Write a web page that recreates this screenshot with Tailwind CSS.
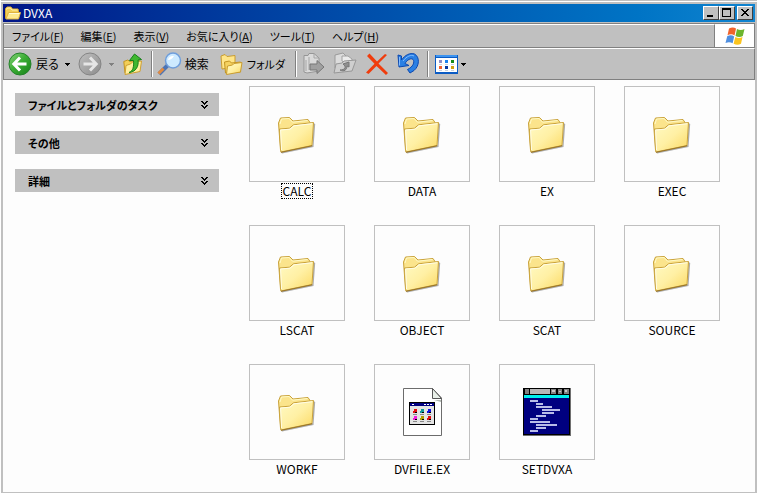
<!DOCTYPE html>
<html lang="ja">
<head>
    <meta charset="UTF-8">
    <meta name="viewport" content="width=device-width, initial-scale=1.0">
    <title>DVXA</title>
    <script src="https://cdn.jsdelivr.net/npm/@tailwindcss/browser@4"></script>
</head>
<body class="bg-[#c0c0c0] font-['Noto_Sans_CJK_JP',sans-serif] text-[12px] leading-[16px] text-black [font-feature-settings:'palt']">
    <!-- Shared icons -->
    <svg class="absolute w-0 h-0">
        <defs>
            <linearGradient id="folderFront" x1="0" y1="0" x2="1" y2="1">
                <stop offset="0" stop-color="#fffac4"/>
                <stop offset="0.5" stop-color="#fff0a4"/>
                <stop offset="1" stop-color="#fbd860"/>
            </linearGradient>
            <linearGradient id="green" x1="0" y1="0" x2="1" y2="1">
                <stop offset="0" stop-color="#8ad47c"/>
                <stop offset="0.45" stop-color="#3cae35"/>
                <stop offset="1" stop-color="#158018"/>
            </linearGradient>
            <linearGradient id="grey" x1="0" y1="0" x2="1" y2="1">
                <stop offset="0" stop-color="#c0c0c0"/>
                <stop offset="1" stop-color="#8c8c8c"/>
            </linearGradient>
        </defs>
        <symbol id="folder" viewBox="0 0 40 40">
            <path d="M5 39.500L36.500 33L38.200 10L36.500 9L35.500 31L4 38z" fill="#777" opacity=".6"/>
            <path d="M3.500 36L1.500 9L3.500 4L12.500 3.500L16 7L31 5.500L33 8.500L34 29z" fill="#fbe48c" stroke="#c9a23a" stroke-linejoin="round"/>
            <path d="M3 10L4.500 5L12 4.500L15.500 8.200L30.500 6.500" fill="none" stroke="#fffac8"/>
            <path d="M3.800 38L2.500 15L12.500 14.200L16.500 10.800L36.500 8.500L35 31.500z" fill="url(#folderFront)" stroke="#c9a23a" stroke-linejoin="round"/>
            <path d="M4.500 36L3.600 16L13 15.200L17 11.800L35.300 9.700" fill="none" stroke="#fffde8"/>
            <path d="M4 38.300L35 31.800" stroke="#987428"/>
        </symbol>
        <symbol id="caret" viewBox="0 0 5 3">
            <path d="M0 0h5v1h-1v1h-1v1h-1v-1h-1v-1h-1z" fill="currentColor" shape-rendering="crispEdges"/>
        </symbol>
        <symbol id="chevrons" viewBox="0 0 7 8">
            <path d="M0 0h2v1h1v1h1v-1h1v-1h2v1h-1v1h-1v1h-1v1h-1v-1h-1v-1h-1v-1h-1zM0 4h2v1h1v1h1v-1h1v-1h2v1h-1v1h-1v1h-1v1h-1v-1h-1v-1h-1v-1h-1z" fill="#000" shape-rendering="crispEdges"/>
        </symbol>
    </svg>

    <div class="min-h-screen flex flex-col border-l border-l-white">
        <div class="h-[2px] border-b border-white"></div>
        <div class="flex-1 flex flex-col pt-[2px] pl-[2px] pr-[2px] pb-px">
            <!-- Title bar -->
            <header class="h-[18px] flex items-center bg-linear-to-r from-[#001488] to-[#1084d0] pl-[2px] pr-[2px]">
                <svg class="w-4 h-4" viewBox="0 0 16 16">
                    <path d="M.5 13.500V3.500l1.500-1.500h4l1.500 2H13l.5 1.500v3" fill="#f3cf58" stroke="#d8a830"/>
                    <path d="M1.500 4.500l1-1.500h3l1.500 2h5.500" fill="none" stroke="#fff3b0"/>
                    <path d="M1 14L3.500 7.500H15.500L13.500 14z" fill="#ffeb90" stroke="#e0b440"/>
                    <path d="M4 8.500h10.500" stroke="#fffbd8"/>
                </svg>
                <h1 class="ml-[2px] text-white">DVXA</h1>
                <div class="ml-auto flex">
                    <button aria-label="最小化" class="w-4 h-[14px] bg-[#c0c0c0] border border-t-white border-l-white border-r-[#404040] border-b-[#404040]">
                        <svg class="w-[14px] h-3" viewBox="0 0 14 12"><path d="M3 8h6v2H3z"/></svg>
                    </button>
                    <button aria-label="最大化" class="w-4 h-[14px] bg-[#c0c0c0] border border-t-white border-l-white border-r-[#404040] border-b-[#404040]">
                        <svg class="w-[14px] h-3" viewBox="0 0 14 12" shape-rendering="crispEdges"><path fill-rule="evenodd" d="M2 1h9v9H2zM3 3h7v6H3z"/></svg>
                    </button>
                    <button aria-label="閉じる" class="ml-[2px] w-4 h-[14px] bg-[#c0c0c0] border border-t-white border-l-white border-r-[#404040] border-b-[#404040]">
                        <svg class="w-[14px] h-3" viewBox="0 0 14 12" shape-rendering="crispEdges"><path d="M3 2h2v1h1v1h2v-1h1v-1h2v1h-1v1h-1v1h-1v1h1v1h1v1h1v1h-2v-1h-1v-1h-2v1h-1v1h-2v-1h1v-1h1v-1h1v-1h-1v-1h-1v-1h-1z"/></svg>
                    </button>
                </div>
            </header>

            <div class="mt-px flex-1 flex flex-col border-t border-l border-[#808080]">
                <!-- Menu bar -->
                <div class="h-6 flex border-b border-[#808080]">
                    <nav class="flex-1 flex items-center gap-[17px] pl-2 border-t border-r border-t-white border-r-[#808080] text-[11px] whitespace-nowrap">
                        <button>ファイル(<u>F</u>)</button>
                        <button>編集(<u>E</u>)</button>
                        <button>表示(<u>V</u>)</button>
                        <button>お気に入り(<u>A</u>)</button>
                        <button>ツール(<u>T</u>)</button>
                        <button>ヘルプ(<u>H</u>)</button>
                    </nav>
                    <div class="w-[40px] flex items-center justify-center bg-white border-r border-[#808080]">
                        <svg class="w-5 h-[18px]" viewBox="0 0 20 18">
                            <path d="M4 1.500C6.500 0 9 0 11 1.500L9.500 8.500C7.500 7 5 7 2.500 8.300z" fill="#f0642c"/>
                            <path d="M12 2C14.500 3.300 17 3.300 19.500 2L17.800 9C15.500 10.300 13 10.200 10.500 9z" fill="#6cb52d"/>
                            <path d="M2.200 9.300C4.700 8 7 8 9.200 9.500L7.600 16.300C5.500 14.800 3 14.800.5 16z" fill="#4f8fe0"/>
                            <path d="M10.300 10C12.800 11.200 15 11.200 17.500 10L16 16.800C13.500 18.200 11 18 8.600 16.800z" fill="#fbc41f"/>
                        </svg>
                    </div>
                </div>

                <!-- Toolbar -->
                <div class="h-8 flex items-center pl-1 border-t border-b border-r border-t-white border-[#808080] whitespace-nowrap">
                    <button class="flex items-center gap-1">
                        <svg class="w-6 h-6" viewBox="0 0 24 24">
                            <circle cx="12" cy="12" r="11" fill="url(#green)" stroke="#24812a"/>
                            <path d="M12 5.500L5.800 12L12 18.500M6.500 12H18.500" fill="none" stroke="#fff" stroke-width="3"/>
                        </svg>
                        戻る
                    </button>
                    <button aria-label="戻る履歴" class="ml-[6px]"><svg class="w-[5px] h-[3px]"><use href="#caret"/></svg></button>
                    <button aria-label="進む" class="ml-2">
                        <svg class="w-6 h-6" viewBox="0 0 24 24">
                            <circle cx="12" cy="12" r="11" fill="url(#grey)" stroke="#858585"/>
                            <path d="M12 5.500L18.200 12L12 18.500M17.500 12H5.500" fill="none" stroke="#e6e6e6" stroke-width="3"/>
                        </svg>
                    </button>
                    <button aria-label="進む履歴" class="ml-[7px] text-[#808080]"><svg class="w-[5px] h-[3px]"><use href="#caret"/></svg></button>
                    <button aria-label="上へ" class="ml-[9px]">
                        <svg class="w-5 h-6" viewBox="0 0 20 24">
                            <path d="M2 21L.8 9.500l4-1.500 2 1.500 9-1.500 1 2.500z" fill="#f2cf58" stroke="#c39522"/>
                            <path d="M2 22.500l1-9 4.500-1.500 2-2 9-1-1.500 10.500z" fill="#fff0a0" stroke="#d0a030"/>
                            <path d="M6 20.500C10 19 11 15 10.500 8.500H6.500l5-6.500L18.500 7.500 15 8C16 14 13 20 6 20.500z" fill="#40b830" stroke="#17801a"/>
                        </svg>
                    </button>
                    <div class="ml-2 w-[2px] h-[26px] bg-white border-l border-[#808080]"></div>
                    <button class="ml-1 flex items-center gap-[3px]">
                        <svg class="w-[25px] h-6" viewBox="0 0 25 24">
                            <path d="M10.500 13.500L2 22" stroke="#4d74b4" stroke-width="4"/>
                            <path d="M6.500 16.500L1.500 21.500" stroke="#e08a40" stroke-width="3"/>
                            <circle cx="16" cy="8.500" r="7.500" fill="#cdeaff" stroke="#6f9edb" stroke-width="1.500"/>
                            <path d="M11 8C11.500 5 14 3.500 17 4C15 7 13 8 11 8z" fill="#fff"/>
                        </svg>
                        検索
                    </button>
                    <button class="ml-[11px] flex items-center gap-1 text-[11px]">
                        <svg class="w-[23px] h-6" viewBox="0 0 23 24">
                            <path d="M2 17L1 4l4-1.500 2 2 8-1V15z" fill="#ffe588" stroke="#c99c30"/>
                            <path d="M5.500 21L4.500 10l5-1 2 2 9-1v10z" fill="#f5d260" stroke="#c39522"/>
                            <path d="M6.500 22.500L7.500 14l5-1 1.500-1.500 8-1L20.500 20z" fill="url(#folderFront)" stroke="#c99c30"/>
                        </svg>
                        フォルダ
                    </button>
                    <div class="ml-[10px] w-[2px] h-[26px] bg-white border-l border-[#808080]"></div>
                    <button aria-label="移動" class="ml-[6px]">
                        <svg class="w-[22px] h-6" viewBox="0 0 22 24">
                            <path d="M1 20V3.500h4l1-2h5L16 6v13L4 21z" fill="#dadada" stroke="#969696"/>
                            <path d="M11 1.500V6h5M3 8v11M6 5v13" fill="none" stroke="#a6a6a6"/>
                            <path d="M7 12h7V8.500l7 6.500-7 6.500V18H7z" fill="#a0a0a0" stroke="#777"/>
                        </svg>
                    </button>
                    <button aria-label="コピー" class="ml-2">
                        <svg class="w-6 h-6" viewBox="0 0 24 24">
                            <path d="M2 16V3l8-2 4 4v11z" fill="#dcdcdc" stroke="#9a9a9a"/>
                            <path d="M9 9V4h6l4 3v8z" fill="#ececec" stroke="#a0a0a0"/>
                            <path d="M1 21l2-9 6-1 2-2 12-1-4 11z" fill="#cfcfcf" stroke="#979797"/>
                            <path d="M7 18C12 18 14 15 10 12L16 10V15L14 14C14 18 11 20 7 18z" fill="#909090" stroke="#777"/>
                        </svg>
                    </button>
                    <button aria-label="削除" class="ml-2">
                        <svg class="w-6 h-6" viewBox="0 0 24 24">
                            <path d="M2 4L4.500 1.500L12 9.500L20 2L22 3L13.500 11.500L23 21L21 23L11.500 14L3.500 22L1 20.500L9.500 11.800z" fill="#f03c0c"/>
                        </svg>
                    </button>
                    <button aria-label="元に戻す" class="ml-2">
                        <svg class="w-[22px] h-6" viewBox="0 0 22 24">
                            <path d="M1 3l3.500 1v4C8 3 13 .5 17.500 2C23 5 22.500 14 17 18.500L13 21L10.500 17.500C16 15 18 10 16 7.500C14 5.500 10 8 8 11.500L12 13.500L2 15z" fill="#2a80e4" stroke="#0c48b0"/>
                            <path d="M2.500 5v8.500M6 9C10 4 14 2.500 17 4" fill="none" stroke="#82bcff"/>
                        </svg>
                    </button>
                    <div class="ml-2 w-[2px] h-[26px] bg-white border-l border-[#808080]"></div>
                    <button aria-label="表示" class="ml-[6px] flex items-center gap-[2px]">
                        <svg class="w-6 h-5" viewBox="0 0 24 20" shape-rendering="crispEdges">
                            <rect x="0" y="1" width="23" height="19" fill="#0a5bc4"/>
                            <rect x="1" y="1" width="21" height="2" fill="#3d94f0"/>
                            <rect x="1" y="4" width="21" height="14" fill="#fff"/>
                            <path d="M4 6h3v3h-3z" fill="#8e8ec8"/><path d="M10 6h3v3h-3z" fill="#1a82f0"/><path d="M16 6h3v3h-3z" fill="#158a18"/>
                            <path d="M4 12h3v3h-3z" fill="#f06030"/><path d="M10 12h3v3h-3z" fill="#0838a0"/><path d="M16 12h3v3h-3z" fill="#d0a010"/>
                            <path d="M4 10h3M10 10h3M16 10h3M4 16h3M10 16h3M16 16h3" stroke="#c8d4e4"/>
                        </svg>
                        <svg class="w-[5px] h-[3px]"><use href="#caret"/></svg>
                    </button>
                </div>

                <div class="flex-1 flex -ml-px bg-[#fdfdfd]">
                    <!-- Task pane -->
                    <aside class="w-[216px] shrink-0 flex flex-col gap-[15px] pl-3 pt-[13px] text-[11px] font-bold">
                        <button class="h-[23px] flex items-center justify-between pl-[13px] pr-[11px] bg-[#c0c0c0]">
                            ファイルとフォルダのタスク
                            <svg class="w-[7px] h-2"><use href="#chevrons"/></svg>
                        </button>
                        <button class="h-[23px] flex items-center justify-between pl-[13px] pr-[11px] bg-[#c0c0c0]">
                            その他
                            <svg class="w-[7px] h-2"><use href="#chevrons"/></svg>
                        </button>
                        <button class="h-[23px] flex items-center justify-between pl-[13px] pr-[11px] bg-[#c0c0c0]">
                            詳細
                            <svg class="w-[7px] h-2"><use href="#chevrons"/></svg>
                        </button>
                    </aside>

                    <!-- Files -->
                    <main class="flex-1 flex flex-wrap content-start gap-x-[29px] gap-y-[26px] pl-[30px] pt-[6px]">
                        <button class="w-24 flex flex-col items-center gap-px">
                            <span class="w-24 h-24 flex items-center justify-center border border-[#c0c0c0]"><svg class="w-10 h-10"><use href="#folder"/></svg></span>
                            <span class="outline outline-dotted outline-black -outline-offset-1 px-[2px]">CALC</span>
                        </button>
                        <button class="w-24 flex flex-col items-center gap-px">
                            <span class="w-24 h-24 flex items-center justify-center border border-[#c0c0c0]"><svg class="w-10 h-10"><use href="#folder"/></svg></span>
                            <span>DATA</span>
                        </button>
                        <button class="w-24 flex flex-col items-center gap-px">
                            <span class="w-24 h-24 flex items-center justify-center border border-[#c0c0c0]"><svg class="w-10 h-10"><use href="#folder"/></svg></span>
                            <span>EX</span>
                        </button>
                        <button class="w-24 flex flex-col items-center gap-px">
                            <span class="w-24 h-24 flex items-center justify-center border border-[#c0c0c0]"><svg class="w-10 h-10"><use href="#folder"/></svg></span>
                            <span>EXEC</span>
                        </button>
                        <button class="w-24 flex flex-col items-center gap-px">
                            <span class="w-24 h-24 flex items-center justify-center border border-[#c0c0c0]"><svg class="w-10 h-10"><use href="#folder"/></svg></span>
                            <span>LSCAT</span>
                        </button>
                        <button class="w-24 flex flex-col items-center gap-px">
                            <span class="w-24 h-24 flex items-center justify-center border border-[#c0c0c0]"><svg class="w-10 h-10"><use href="#folder"/></svg></span>
                            <span>OBJECT</span>
                        </button>
                        <button class="w-24 flex flex-col items-center gap-px">
                            <span class="w-24 h-24 flex items-center justify-center border border-[#c0c0c0]"><svg class="w-10 h-10"><use href="#folder"/></svg></span>
                            <span>SCAT</span>
                        </button>
                        <button class="w-24 flex flex-col items-center gap-px">
                            <span class="w-24 h-24 flex items-center justify-center border border-[#c0c0c0]"><svg class="w-10 h-10"><use href="#folder"/></svg></span>
                            <span>SOURCE</span>
                        </button>
                        <button class="w-24 flex flex-col items-center gap-px">
                            <span class="w-24 h-24 flex items-center justify-center border border-[#c0c0c0]"><svg class="w-10 h-10"><use href="#folder"/></svg></span>
                            <span>WORKF</span>
                        </button>
                        <button class="w-24 flex flex-col items-center gap-px">
                            <span class="w-24 h-24 flex items-center justify-center border border-[#c0c0c0]">
                                <svg class="w-12 h-12" viewBox="0 0 48 48">
                                    <path d="M5.500 .5H34.500L43.500 10V47.500H5.500z" fill="#fff" stroke="#6c6c6c"/>
                                    <path d="M34.500 .5V10.500H43.500z" fill="#e8efe8" stroke="#555"/>
                                    <path d="M36 12h7v2z" fill="#b0b8b0"/>
                                    <g shape-rendering="crispEdges">
                                        <path d="M11 14h26v23H11z" fill="#000"/>
                                        <path d="M12 15h24v21H12z" fill="#e4e4e4"/>
                                        <path d="M12 15h24v3H12z" fill="#000080"/>
                                        <path d="M14 16h2v1h-2zM26 16h2v1h-2zM29 16h2v1h-2zM32 16h2v1h-2z" fill="#fff"/>
                                        <path d="M16 21h3v4h-4v-2h1zM30 28h3v4h-4v-2h1z" fill="#e01010"/>
                                        <path d="M23 21h3v4h-4v-2h1z" fill="#109898"/>
                                        <path d="M30 21h3v4h-4v-2h1z" fill="#1010e0"/>
                                        <path d="M16 28h3v4h-4v-2h1z" fill="#f020e0"/>
                                        <path d="M23 28h3v4h-4v-2h1z" fill="#b0a000"/>
                                        <path d="M17 24h2v1h-2zM24 24h2v1h-2zM31 24h2v1h-2zM17 31h2v1h-2zM24 31h2v1h-2zM31 31h2v1h-2z" fill="#000"/>
                                        <path d="M15 26h4v1h-4zM22 26h4v1h-4zM29 26h4v1h-4zM15 33h4v1h-4zM22 33h4v1h-4zM29 33h4v1h-4z" fill="#888"/>
                                    </g>
                                </svg>
                            </span>
                            <span>DVFILE.EX</span>
                        </button>
                        <button class="w-24 flex flex-col items-center gap-px">
                            <span class="w-24 h-24 flex items-center justify-center border border-[#c0c0c0]">
                                <svg class="w-12 h-12" viewBox="0 0 48 48" shape-rendering="crispEdges">
                                    <path d="M0 0h48v48H0z" fill="#707070"/>
                                    <path d="M0 0h47v47H0z" fill="#000"/>
                                    <path d="M1 7h45v39H1z" fill="#000080"/>
                                    <path d="M1 7h45v3H1z" fill="#00f0f0"/>
                                    <path d="M2 1h4v5H2zM28 1h5v5h-5zM35 1h4v5h-4zM41 1h5v5h-5z" fill="#808080"/>
                                    <path d="M7 1h20v5H7z" fill="#b8b8b8"/>
                                    <path d="M29 2h3v2h-3zM36 3h2v1h-2zM42 2h2v2h-2z" fill="#c8c8c8"/>
                                    <path d="M7 12h8v2H7zM13 15h7v2h-7zM13 18h16v2H13zM19 21h18v2H19zM19 24h12v2H19zM13 27h10v2H13zM7 30h8v2H7zM7 33h20v2H7zM13 36h21v2H13zM13 39h10v2H13zM7 42h8v2H7z" fill="#b8bce8"/>
                                </svg>
                            </span>
                            <span>SETDVXA</span>
                        </button>
                    </main>
                </div>
            </div>
        </div>
    </div>
</body>
</html>
